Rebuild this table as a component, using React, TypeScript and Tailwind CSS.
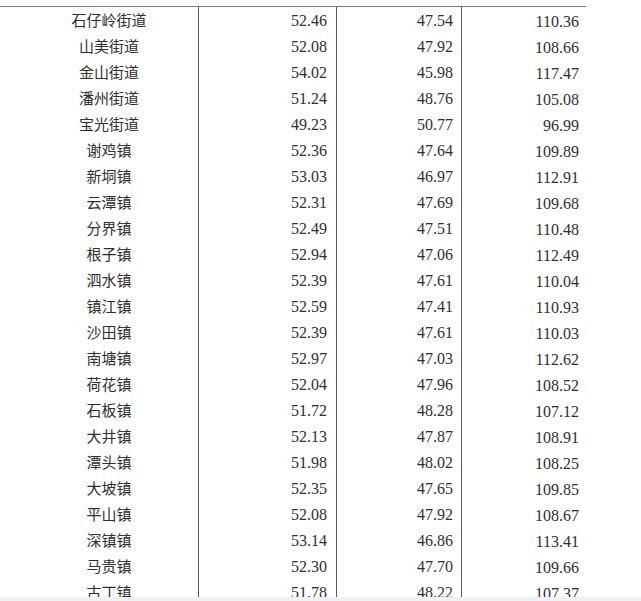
const rows: Array<[string, string, string, string]> = [
  ['石仔岭街道', '52.46', '47.54', '110.36'],
  ['山美街道', '52.08', '47.92', '108.66'],
  ['金山街道', '54.02', '45.98', '117.47'],
  ['潘州街道', '51.24', '48.76', '105.08'],
  ['宝光街道', '49.23', '50.77', '96.99'],
  ['谢鸡镇', '52.36', '47.64', '109.89'],
  ['新垌镇', '53.03', '46.97', '112.91'],
  ['云潭镇', '52.31', '47.69', '109.68'],
  ['分界镇', '52.49', '47.51', '110.48'],
  ['根子镇', '52.94', '47.06', '112.49'],
  ['泗水镇', '52.39', '47.61', '110.04'],
  ['镇江镇', '52.59', '47.41', '110.93'],
  ['沙田镇', '52.39', '47.61', '110.03'],
  ['南塘镇', '52.97', '47.03', '112.62'],
  ['荷花镇', '52.04', '47.96', '108.52'],
  ['石板镇', '51.72', '48.28', '107.12'],
  ['大井镇', '52.13', '47.87', '108.91'],
  ['潭头镇', '51.98', '48.02', '108.25'],
  ['大坡镇', '52.35', '47.65', '109.85'],
  ['平山镇', '52.08', '47.92', '108.67'],
  ['深镇镇', '53.14', '46.86', '113.41'],
  ['马贵镇', '52.30', '47.70', '109.66'],
  ['古丁镇', '51.78', '48.22', '107.37'],
]

export default function App() {
  return (
    <div className="flex h-[601px] w-[641px] flex-col overflow-hidden bg-white text-[#2f2f2f]">
      <div className="mt-[6px] w-[586px] flex-1 overflow-hidden border-t border-[#7d7d7d]">
        {rows.map(([name, a, b, c]) => (
          <div key={name} className="grid h-[26px] grid-cols-[199px_138px_125px_124px]">
            <div
              className="flex items-center justify-center border-r border-[#5a5a5a] pl-[20px] text-[15px]"
              style={{ fontFamily: '"Noto Sans CJK SC", sans-serif' }}
            >
              {name}
            </div>
            <Num value={a} className="border-r border-[#5a5a5a] pr-[9px]" />
            <Num value={b} className="border-r border-[#5a5a5a] pr-[8px]" />
            <Num value={c} className="pr-[7px] pt-[3px]" />
          </div>
        ))}
        <div className="grid h-[20px] grid-cols-[199px_138px_125px_124px]">
          <div className="border-r border-[#5a5a5a]" />
          <div className="border-r border-[#5a5a5a]" />
          <div className="border-r border-[#5a5a5a]" />
          <div />
        </div>
      </div>
      <div className="h-[4px] w-full shrink-0 bg-[#f1f1f3]" />
    </div>
  )
}

function Num({ value, className }: { value: string; className: string }) {
  return (
    <div
      className={`flex items-center justify-end text-[16px] ${className}`}
      style={{ fontFamily: '"Liberation Serif", serif' }}
    >
      {value}
    </div>
  )
}
